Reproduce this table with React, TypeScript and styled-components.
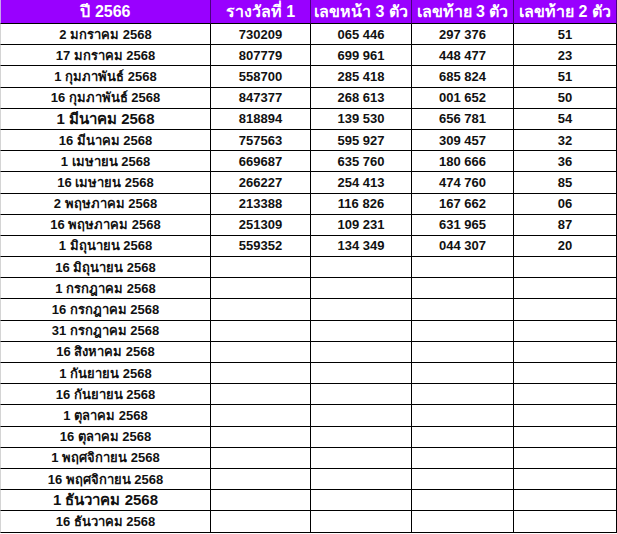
import React from "react";
import styled, { createGlobalStyle } from "styled-components";

const GlobalStyle = createGlobalStyle`
  html, body {
    margin: 0;
    padding: 0;
    background: #ffffff;
  }
  body {
    font-family: "Liberation Sans", "Noto Sans", Arial, sans-serif;
  }
`;

type Row = {
  date: string;
  big?: boolean;
  first?: string;
  front?: string;
  back?: string;
  two?: string;
};

const rows: Row[] = [
  { date: "2 มกราคม 2568", first: "730209", front: "065 446", back: "297 376", two: "51" },
  { date: "17 มกราคม 2568", first: "807779", front: "699 961", back: "448 477", two: "23" },
  { date: "1 กุมภาพันธ์ 2568", first: "558700", front: "285 418", back: "685 824", two: "51" },
  { date: "16 กุมภาพันธ์ 2568", first: "847377", front: "268 613", back: "001 652", two: "50" },
  { date: "1 มีนาคม 2568", big: true, first: "818894", front: "139 530", back: "656 781", two: "54" },
  { date: "16 มีนาคม 2568", first: "757563", front: "595 927", back: "309 457", two: "32" },
  { date: "1 เมษายน 2568", first: "669687", front: "635 760", back: "180 666", two: "36" },
  { date: "16 เมษายน 2568", first: "266227", front: "254 413", back: "474 760", two: "85" },
  { date: "2 พฤษภาคม 2568", first: "213388", front: "116 826", back: "167 662", two: "06" },
  { date: "16 พฤษภาคม 2568", first: "251309", front: "109 231", back: "631 965", two: "87" },
  { date: "1 มิถุนายน 2568", first: "559352", front: "134 349", back: "044 307", two: "20" },
  { date: "16 มิถุนายน 2568" },
  { date: "1 กรกฎาคม 2568" },
  { date: "16 กรกฎาคม 2568" },
  { date: "31 กรกฎาคม 2568" },
  { date: "16 สิงหาคม 2568" },
  { date: "1 กันยายน 2568" },
  { date: "16 กันยายน 2568" },
  { date: "1 ตุลาคม 2568" },
  { date: "16 ตุลาคม 2568" },
  { date: "1 พฤศจิกายน 2568" },
  { date: "16 พฤศจิกายน 2568" },
  { date: "1 ธันวาคม 2568", big: true },
  { date: "16 ธันวาคม 2568" },
];

const headers = ["ปี 2566", "รางวัลที่ 1", "เลขหน้า 3 ตัว", "เลขท้าย 3 ตัว", "เลขท้าย 2 ตัว"];

const Sheet = styled.div`
  display: grid;
  grid-template-columns: 211px 100px 101px 102px 103px;
  grid-template-rows: 24px repeat(24, 21.2px);
  width: 617px;
`;

const HeadCell = styled.div<{ $first?: boolean }>`
  box-sizing: border-box;
  display: flex;
  align-items: center;
  justify-content: center;
  background: #9900ff;
  color: #ffffff;
  font-weight: bold;
  font-size: 16px;
  white-space: nowrap;
  overflow: hidden;
  border-right: 1px solid #4a0080;
  border-bottom: 1px solid #000000;
  border-left: ${(p) => (p.$first ? "1px solid #c9a0f0" : "none")};
`;

const Cell = styled.div<{ $first?: boolean; $big?: boolean }>`
  box-sizing: border-box;
  display: flex;
  align-items: center;
  justify-content: center;
  color: #111111;
  font-weight: bold;
  font-size: ${(p) => (p.$big ? "15px" : "13px")};
  white-space: nowrap;
  overflow: hidden;
  border-right: 1px solid #000000;
  border-bottom: 1px solid #000000;
  border-left: ${(p) => (p.$first ? "1px solid #d4d4d4" : "none")};
`;

export default function App() {
  return (
    <>
      <GlobalStyle />
      <Sheet>
        {headers.map((h, i) => (
          <HeadCell key={h} $first={i === 0}>
            {h}
          </HeadCell>
        ))}
        {rows.map((r) => (
          <React.Fragment key={r.date}>
            <Cell $first $big={r.big}>
              {r.date}
            </Cell>
            <Cell>{r.first}</Cell>
            <Cell>{r.front}</Cell>
            <Cell>{r.back}</Cell>
            <Cell>{r.two}</Cell>
          </React.Fragment>
        ))}
      </Sheet>
    </>
  );
}
